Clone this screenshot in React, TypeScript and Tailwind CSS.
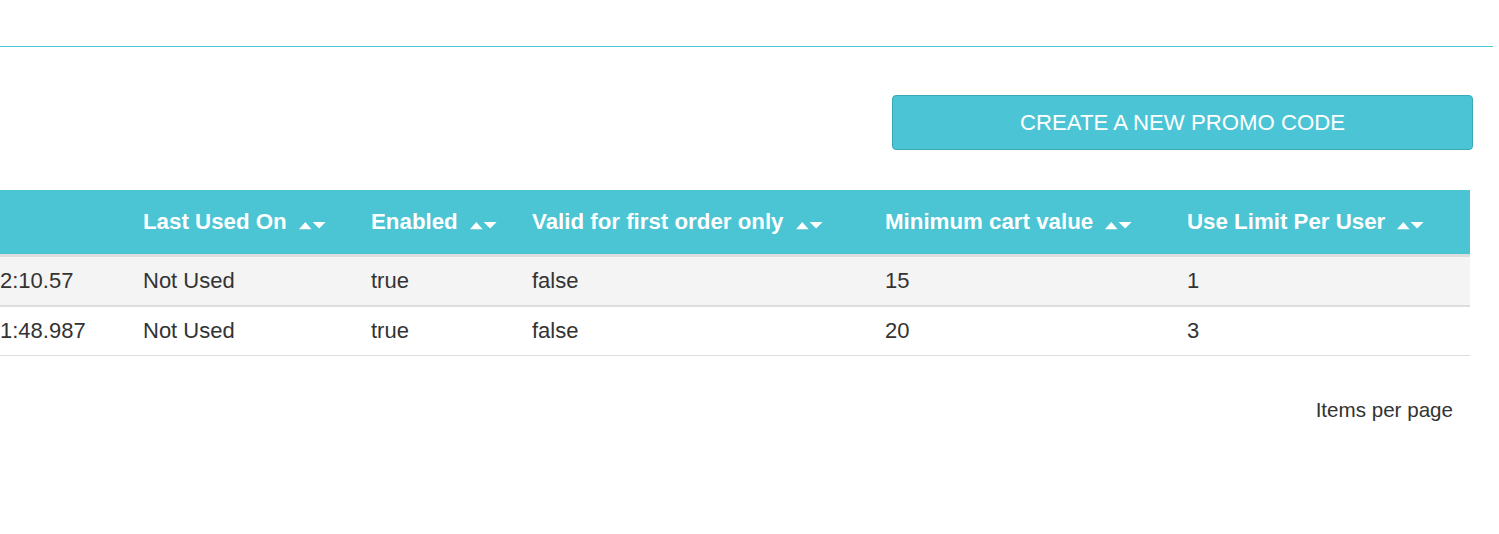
const columns = [
  { key: 'created', label: '' },
  { key: 'lastUsed', label: 'Last Used On' },
  { key: 'enabled', label: 'Enabled' },
  { key: 'firstOrder', label: 'Valid for first order only' },
  { key: 'minCart', label: 'Minimum cart value' },
  { key: 'useLimit', label: 'Use Limit Per User' },
];

const rows = [
  { created: '2:10.57', lastUsed: 'Not Used', enabled: 'true', firstOrder: 'false', minCart: '15', useLimit: '1' },
  { created: '1:48.987', lastUsed: 'Not Used', enabled: 'true', firstOrder: 'false', minCart: '20', useLimit: '3' },
];

const gridCols = 'grid grid-cols-[128px_228px_161px_353px_302px_298px]';

const SortIcon = () => (
  <svg width="27" height="8" viewBox="0 0 27 8" className="ml-3 translate-y-[4px] shrink-0" fill="white">
    <polygon points="0,7.2 6.3,0 12.6,7.2" />
    <polygon points="13.6,0 26.6,0 20.1,6.4" />
  </svg>
);

const App = () => {
  return (
    <div className="w-full h-[534px] bg-white text-[#333] font-['Liberation_Sans',Arial,sans-serif] overflow-hidden">
      <div className="pt-[46px]">
        <div className="h-px w-[1493px] bg-[#4bc8d6]" />
      </div>

      <div className="w-[1473px] flex justify-end mt-[48px]">
        <button className="w-[581px] h-[55px] rounded-[4px] bg-[#4bc5d5] border border-[#38a9b6] text-white text-[22.2px] uppercase">
          Create a new promo code
        </button>
      </div>

      <div className="w-[1470px] mt-[40px]">
        <div className={`${gridCols} h-[67px] bg-[#4bc4d4] text-white font-bold text-[22.3px] border-b-[3px] border-[#dddddd]`}>
          {columns.map((col, i) => (
            <div key={col.key} className={`flex items-center ${i === 0 ? 'pl-0' : 'pl-[15px]'}`}>
              {col.label && (
                <>
                  <span className="whitespace-nowrap">{col.label}</span>
                  <SortIcon />
                </>
              )}
            </div>
          ))}
        </div>

        {rows.map((row, r) => (
          <div
            key={r}
            className={`${gridCols} h-[48px] text-[22px] ${r === 0 ? 'bg-[#f4f4f4] border-b-2' : 'bg-white border-b'} border-[#dddddd] box-content`}
          >
            {columns.map((col, i) => (
              <div key={col.key} className={`flex items-center whitespace-nowrap pb-[2px] ${i === 0 ? 'pl-0' : 'pl-[15px]'}`}>
                {row[col.key as keyof typeof row]}
              </div>
            ))}
          </div>
        ))}
      </div>

      <div className="w-[1470px] flex justify-end pr-[17px] mt-[39px]">
        <span className="text-[20.6px]">Items per page</span>
      </div>
    </div>
  );
};

export default App;
